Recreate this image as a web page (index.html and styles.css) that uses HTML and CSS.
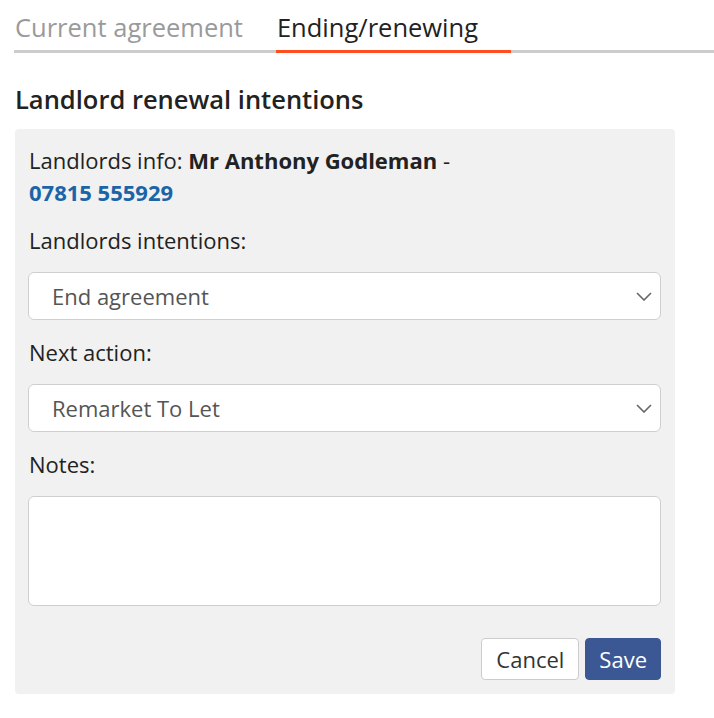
FILE: index.html
```html
<!DOCTYPE html>
<html>
<head>
<meta charset="utf-8">
<link rel="stylesheet" href="styles.css">
</head>
<body>
<div class="page">
  <div class="tabs">
    <div class="tab">Current agreement</div>
    <div class="tab active">Ending/renewing</div>
  </div>
  <h2 class="title">Landlord renewal intentions</h2>
  <div class="panel">
    <div class="info">Landlords info: <b>Mr Anthony Godleman</b> -<br><a class="phone">07815 555929</a></div>
    <div class="label">Landlords intentions:</div>
    <div class="select"><span>End agreement</span>
      <svg class="chev" width="16" height="9" viewBox="0 0 16 9"><path d="M1 1 L8 8 L15 1" fill="none" stroke="#666" stroke-width="1.6"/></svg>
    </div>
    <div class="label">Next action:</div>
    <div class="select"><span>Remarket To Let</span>
      <svg class="chev" width="16" height="9" viewBox="0 0 16 9"><path d="M1 1 L8 8 L15 1" fill="none" stroke="#666" stroke-width="1.6"/></svg>
    </div>
    <div class="label">Notes:</div>
    <div class="textarea"></div>
    <div class="actions">
      <button class="btn cancel">Cancel</button>
      <button class="btn save">Save</button>
    </div>
  </div>
</div>
</body>
</html>
```
FILE: styles.css
```css
* { box-sizing: border-box; }
body {
  margin: 0;
  font-family: "Open Sans", "DejaVu Sans", sans-serif;
  color: #222;
  background: #fff;
}
.page {
  padding: 8px 0 0 15px;
}
.tabs {
  display: flex;
  border-bottom: 3px solid #ccc;
  margin-left: -1px;
}
.tab {
  font-size: 25.5px;
  line-height: 38px;
  padding: 0 33px 4px 1px;
  color: #9a9a9a;
  margin-bottom: -3px;
  border-bottom: 3px solid transparent;
}
.tab.active {
  color: #222;
  border-bottom-color: #ff4f1f;
}
.title {
  font-size: 25.5px;
  font-weight: 600;
  margin: 29px 0 0;
  line-height: 34px;
  color: #222;
}
.panel {
  margin-top: 13px;
  width: 660px;
  background: #f1f1f1;
  border-radius: 4px;
  padding: 15px 14px 14px 13px;
}
.info {
  font-size: 22px;
  line-height: 32px;
  padding-left: 1px;
}
.info b { font-weight: 700; }
.phone {
  color: #1a64a8;
  font-weight: 700;
}
.label {
  font-size: 22px;
  line-height: 32px;
  margin-top: 16px;
  padding-left: 1px;
}
.select {
  margin-top: 16px;
  height: 48px;
  background: #fff;
  border: 1px solid #cfcfcf;
  border-radius: 6px;
  display: flex;
  align-items: center;
  justify-content: space-between;
  padding: 0 8px 0 23px;
  font-size: 22px;
  color: #555;
}
.chev { display: block; }
.textarea {
  margin-top: 16px;
  height: 110px;
  background: #fff;
  border: 1px solid #cfcfcf;
  border-radius: 6px;
}
.actions {
  display: flex;
  justify-content: flex-end;
  gap: 6px;
  margin-top: 32px;
}
.btn {
  font-family: "Open Sans", "DejaVu Sans", sans-serif;
  font-size: 22px;
  height: 42px;
  border-radius: 4px;
  padding: 0 13px;
  cursor: pointer;
}
.cancel {
  background: #fff;
  border: 1px solid #ccc;
  color: #333;
  padding: 0 14px;
}
.save {
  background: #3b5894;
  border: 1px solid #3b5894;
  color: #fff;
}
```
